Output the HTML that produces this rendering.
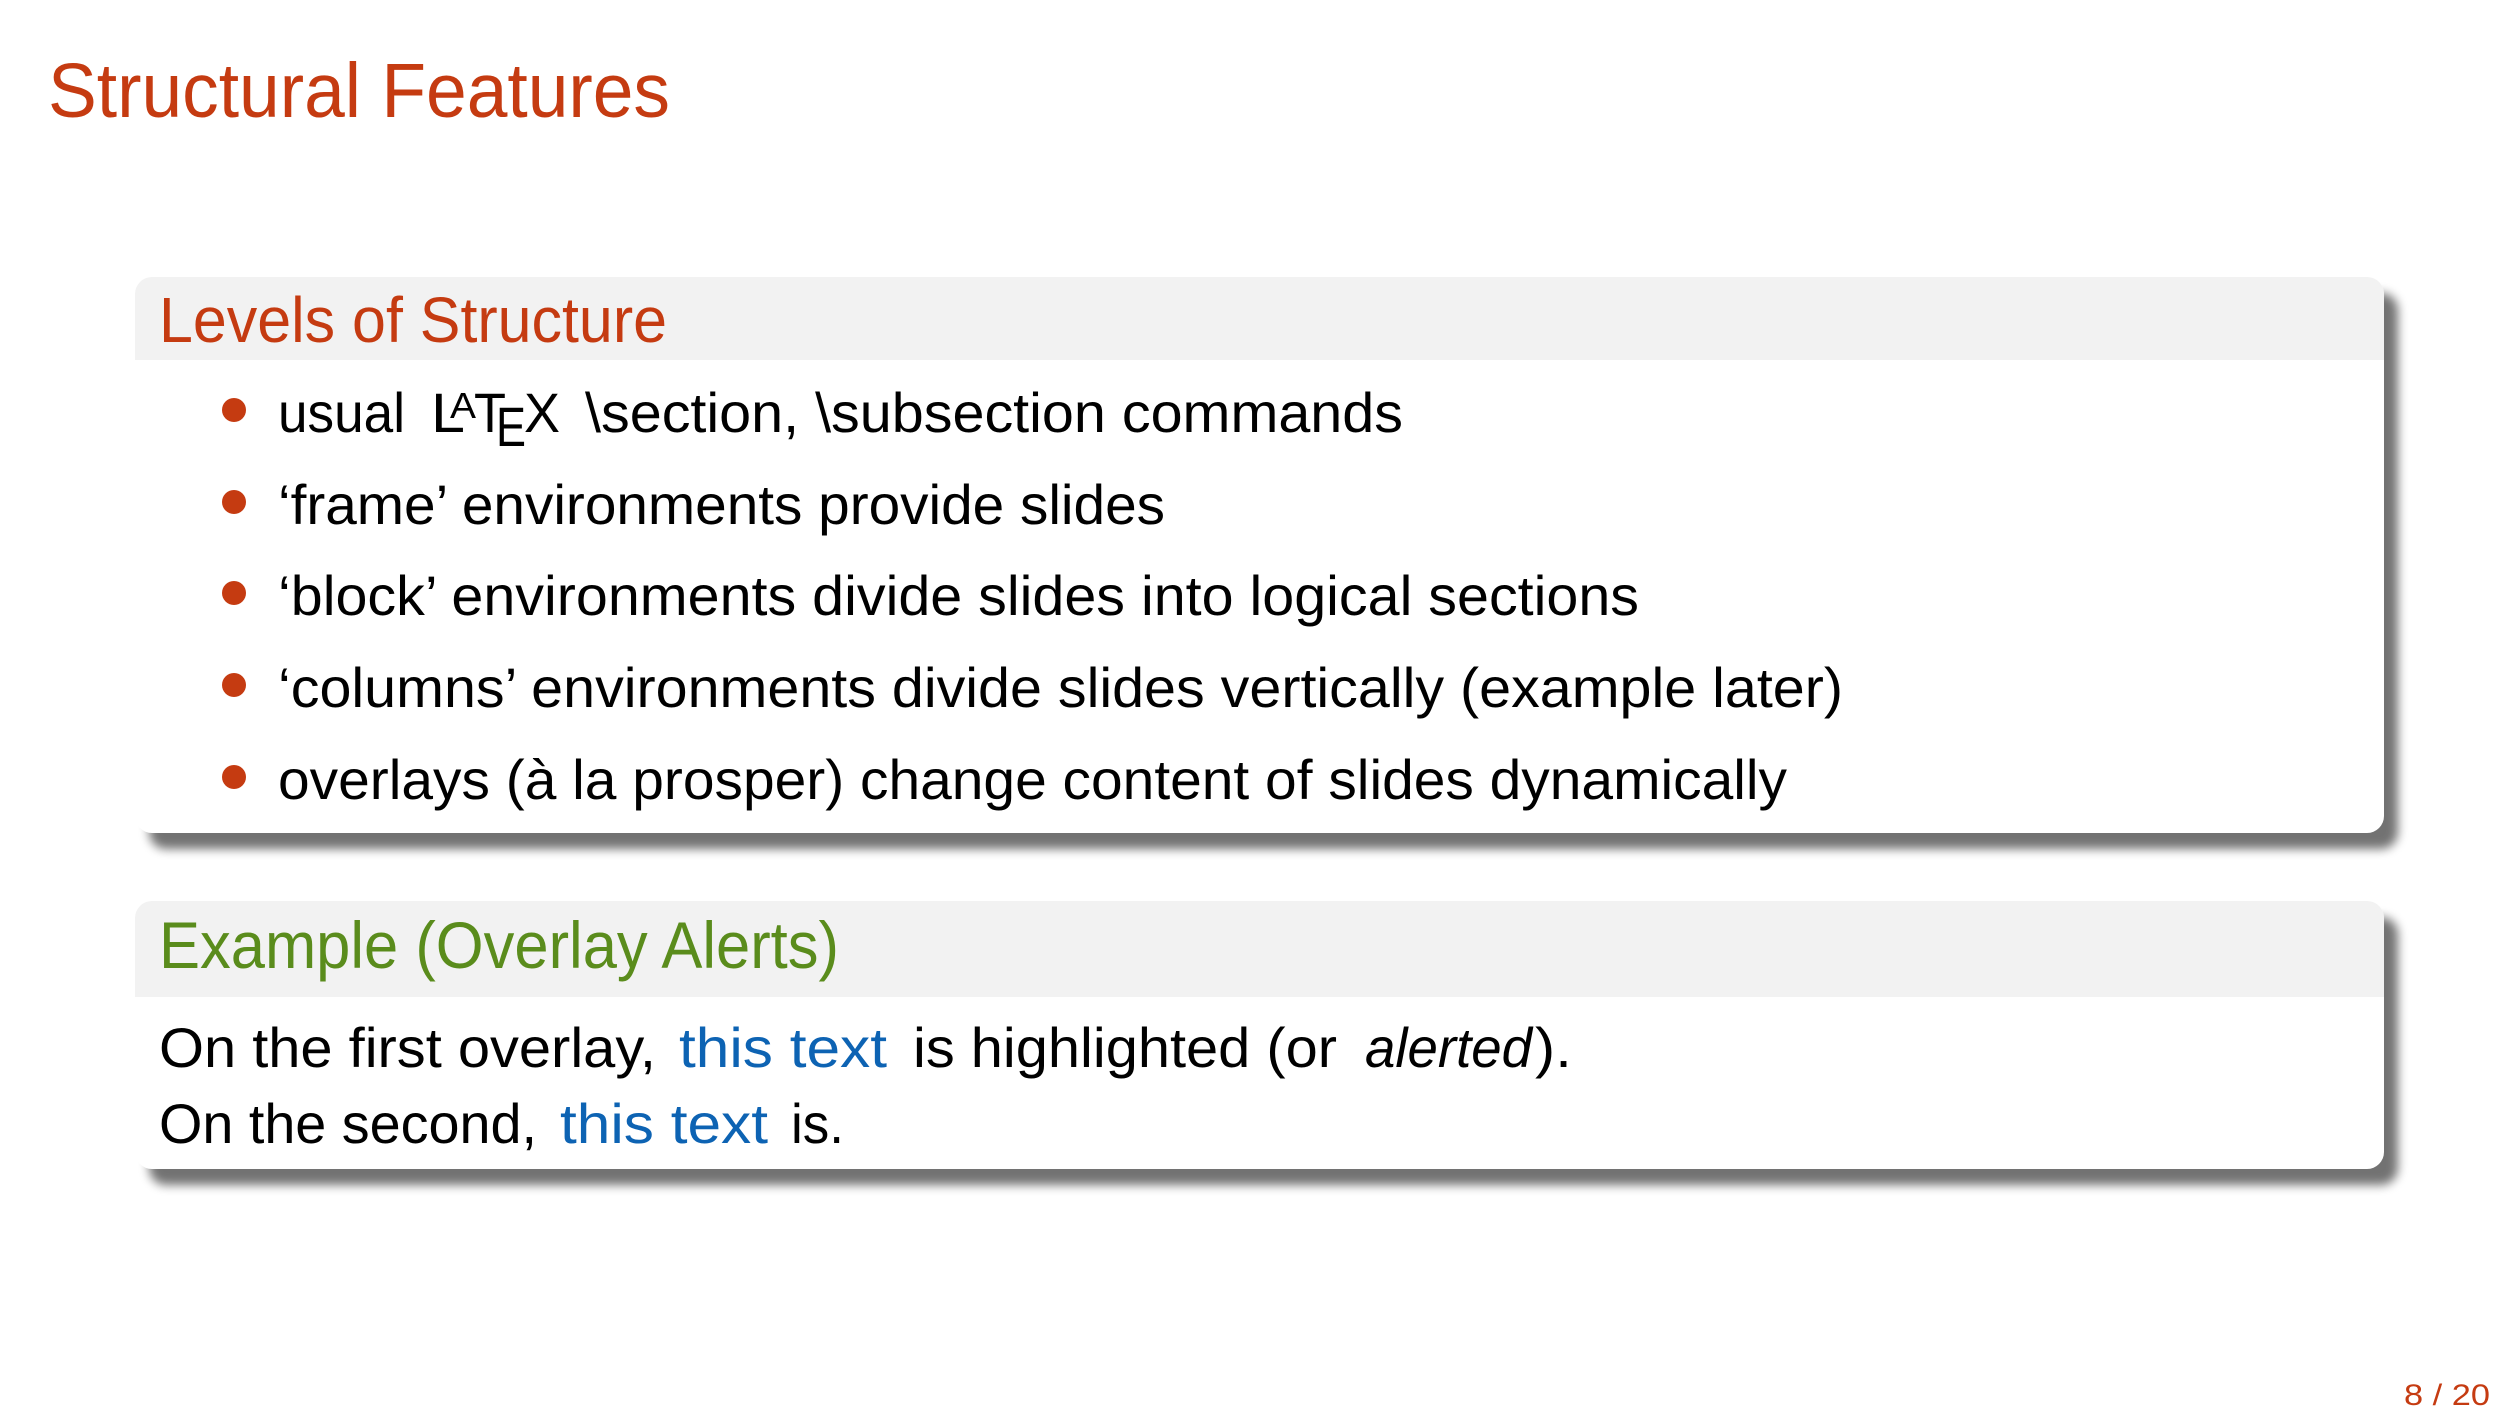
<!DOCTYPE html>
<html><head><meta charset="utf-8"><style>
html,body{margin:0;padding:0;background:#fff;}
svg{display:block;}
text{font-family:"Liberation Sans","DejaVu Sans",sans-serif;}
</style></head><body>
<svg width="2519" height="1417" viewBox="0 0 2519 1417" xmlns="http://www.w3.org/2000/svg">
<defs>
<filter id="sh" x="-5%" y="-10%" width="110%" height="130%">
<feGaussianBlur stdDeviation="5"/>
</filter>
<clipPath id="c1"><rect x="135" y="277" width="2249" height="556" rx="17"/></clipPath>
<clipPath id="c2"><rect x="135" y="901" width="2249" height="268" rx="17"/></clipPath>
</defs>
<text x="48" y="117" font-size="77" fill="#c53b11" textLength="622" lengthAdjust="spacingAndGlyphs">Structural Features</text>

<rect x="149" y="293" width="2249" height="556" rx="17" fill="#000" opacity="0.55" filter="url(#sh)"/>
<rect x="135" y="277" width="2249" height="556" rx="17" fill="#fff"/>
<g clip-path="url(#c1)"><rect x="135" y="277" width="2249" height="83" fill="#f2f2f2"/></g>
<text x="159" y="342" font-size="64" fill="#c53b11" textLength="508" lengthAdjust="spacingAndGlyphs">Levels of Structure</text>

<g fill="#c53b11">
<circle cx="234" cy="410" r="12"/>
<circle cx="234" cy="502" r="12"/>
<circle cx="234" cy="593" r="12"/>
<circle cx="234" cy="685" r="12"/>
<circle cx="234" cy="777" r="12"/>
</g>
<g font-size="56" fill="#000">
<text x="278" y="432" textLength="127" lengthAdjust="spacingAndGlyphs">usual</text>
<text x="431" y="432" textLength="34" lengthAdjust="spacingAndGlyphs">L</text>
<text x="450" y="418" font-size="36" textLength="26" lengthAdjust="spacingAndGlyphs">A</text>
<text x="474" y="432" textLength="32" lengthAdjust="spacingAndGlyphs">T</text>
<text x="496" y="446" textLength="30" lengthAdjust="spacingAndGlyphs">E</text>
<text x="524" y="432" textLength="36" lengthAdjust="spacingAndGlyphs">X</text>
<text x="585" y="432" textLength="818" lengthAdjust="spacingAndGlyphs">\section, \subsection commands</text>
<text x="278" y="524" textLength="887" lengthAdjust="spacingAndGlyphs">‘frame’ environments provide slides</text>
<text x="278" y="615" textLength="1361" lengthAdjust="spacingAndGlyphs">‘block’ environments divide slides into logical sections</text>
<text x="278" y="707" textLength="1565" lengthAdjust="spacingAndGlyphs">‘columns’ environments divide slides vertically (example later)</text>
<text x="278" y="799" textLength="1509" lengthAdjust="spacingAndGlyphs">overlays (à la prosper) change content of slides dynamically</text>
</g>

<rect x="149" y="917" width="2249" height="268" rx="17" fill="#000" opacity="0.55" filter="url(#sh)"/>
<rect x="135" y="901" width="2249" height="268" rx="17" fill="#fff"/>
<g clip-path="url(#c2)"><rect x="135" y="901" width="2249" height="96" fill="#f2f2f2"/></g>
<text x="159" y="968" font-size="66" fill="#5a8c1c" textLength="680" lengthAdjust="spacingAndGlyphs">Example (Overlay Alerts)</text>

<g font-size="56" fill="#000">
<text x="159" y="1067" textLength="497" lengthAdjust="spacingAndGlyphs">On the first overlay,</text>
<text x="679" y="1067" fill="#0d63b3" textLength="208" lengthAdjust="spacingAndGlyphs">this text</text>
<text x="913" y="1067" textLength="424" lengthAdjust="spacingAndGlyphs">is highlighted (or</text>
<text x="1365" y="1067" font-style="italic" textLength="167" lengthAdjust="spacingAndGlyphs">alerted</text>
<text x="1535" y="1067" textLength="37" lengthAdjust="spacingAndGlyphs">).</text>
<text x="159" y="1143" textLength="378" lengthAdjust="spacingAndGlyphs">On the second,</text>
<text x="560" y="1143" fill="#0d63b3" textLength="208" lengthAdjust="spacingAndGlyphs">this text</text>
<text x="791" y="1143" textLength="53" lengthAdjust="spacingAndGlyphs">is.</text>
</g>

<text x="2404" y="1405" font-size="30" fill="#c53b11" textLength="86" lengthAdjust="spacingAndGlyphs">8 / 20</text>
</svg>
</body></html>
